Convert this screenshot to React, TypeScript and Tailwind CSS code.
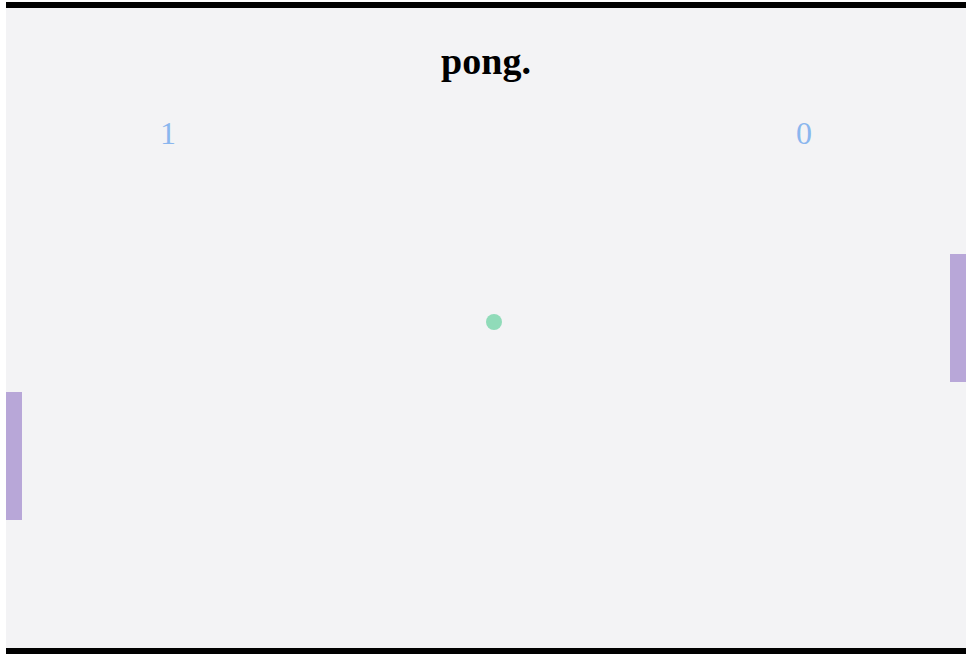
export default function App() {
  return (
    <div className="flex h-screen w-full items-center justify-center bg-white">
      {/* Board */}
      <div className="relative h-[652px] w-[960px] border-y-[6px] border-black bg-[#f3f3f5] font-['Liberation_Serif',serif]">
        <h1 className="pt-[34px] text-center text-[38px] font-bold leading-none text-black">pong.</h1>

        {/* Scores */}
        <div className="mt-[37px] flex justify-between px-[154px] text-[32px] leading-none text-[#8ab6ee]">
          <span>1</span>
          <span>0</span>
        </div>

        {/* Paddles and ball */}
        <div className="absolute left-0 top-[384px] h-[128px] w-[16px] bg-[#b8a7d8]" />
        <div className="absolute right-0 top-[246px] h-[128px] w-[16px] bg-[#b8a7d8]" />
        <div className="absolute left-[480px] top-[306px] h-[16px] w-[16px] rounded-full bg-[#90dbb9]" />
      </div>
    </div>
  )
}
